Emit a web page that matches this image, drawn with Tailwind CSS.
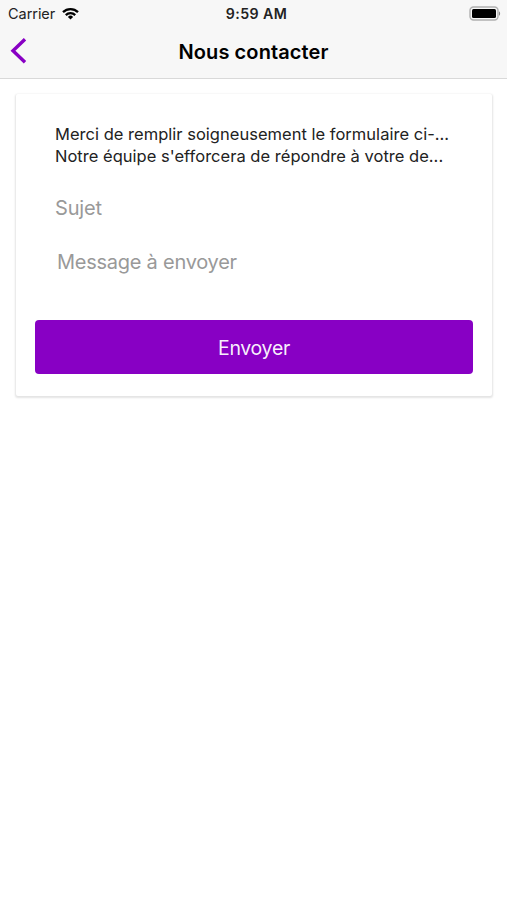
<!DOCTYPE html>
<html lang="fr">
<head>
    <meta charset="UTF-8">
    <meta name="viewport" content="width=device-width, initial-scale=1.0">
    <title>Nous contacter</title>
    <script src="https://cdn.jsdelivr.net/npm/@tailwindcss/browser@4"></script>
</head>
<body class="bg-white font-['Inter','Liberation_Sans',sans-serif]">
    <div class="min-h-screen">
        <header class="h-[79px] bg-[#f7f7f7] border-b border-[#d9d9d9]">
            <!-- Barre d'état -->
            <div class="h-[27px] grid grid-cols-3 items-center pl-2 pr-[6px] text-[#222]">
                <div class="flex items-center gap-[7px]">
                    <span class="text-[14.5px] leading-[27px] tracking-[-0.05px]">Carrier</span>
                    <svg class="w-[17px] h-[13px]" viewBox="0 0 17 13" fill="none" stroke="#000" stroke-width="2.3">
                        <path d="M1 5.1a10.7 10.7 0 0 1 15 0"/>
                        <path d="M3.8 8.1a6.7 6.7 0 0 1 9.4 0"/>
                        <path d="M8.5 12.5 5.9 9.9a3.7 3.7 0 0 1 5.2 0Z" fill="#000" stroke="none"/>
                    </svg>
                </div>
                <span class="pl-[4px] text-center text-[14.2px] leading-[27px] tracking-[0.4px] font-semibold whitespace-nowrap">9:59 AM</span>
                <svg class="w-[32px] h-[15px] justify-self-end" viewBox="0 0 32 15">
                    <rect x="1" y="1" width="28" height="13" rx="3.5" fill="#f7f7f7" stroke="#b0b0b0" stroke-width="1.4"/>
                    <rect x="3" y="3" width="24" height="9" rx="1.5" fill="#000"/>
                    <path d="M30 5.2c1.5.8 1.5 3.8 0 4.6Z" fill="#888"/>
                </svg>
            </div>
            <!-- Navigation -->
            <div class="h-[51px] grid grid-cols-[1fr_auto_1fr] items-center">
                <button class="pl-[10px] pb-1 justify-self-start" aria-label="Retour">
                    <svg class="w-[17px] h-[26px]" viewBox="0 0 17 26" fill="none" stroke="#8800c4" stroke-width="3.4">
                        <path d="M15 1.2 3 12.7 15 24.2"/>
                    </svg>
                </button>
                <h1 class="text-[20px] leading-[51px] tracking-[0.1px] font-semibold text-black">Nous contacter</h1>
            </div>
        </header>

        <main class="px-4 pt-[15px]">
            <form class="w-[476px] h-[302px] px-[19px] pt-[29px] rounded-[2px] bg-white shadow-[0_1px_2px_1px_rgba(0,0,0,0.11)]">
                <div class="px-5 text-[16.5px] leading-[22px] tracking-[0.02px] text-[#222]">
                    <p class="whitespace-nowrap">Merci de remplir soigneusement le formulaire ci-...</p>
                    <p class="whitespace-nowrap">Notre équipe s'efforcera de répondre à votre de...</p>
                </div>
                <input type="text" placeholder="Sujet"
                       class="block w-full h-[30px] mt-[26px] px-5 text-[20px] leading-[30px] tracking-[-0.15px] placeholder:text-[#999] outline-none">
                <textarea placeholder="Message à envoyer"
                          class="block w-full h-[60px] mt-6 pl-[22px] pr-5 text-[20px] leading-[30px] tracking-[-0.25px] placeholder:text-[#999] outline-none resize-none"></textarea>
                <button type="button" class="block w-[438px] h-[54px] mt-[13px] pt-[3px] rounded-[4px] bg-[#8800c4] text-[19.5px] tracking-[-0.3px] text-white/95">
                    Envoyer
                </button>
            </form>
        </main>
    </div>
</body>
</html>
